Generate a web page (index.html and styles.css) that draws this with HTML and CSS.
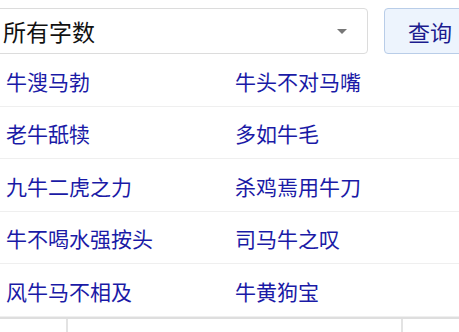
FILE: index.html
```html
<!DOCTYPE html>
<html lang="zh-CN">
<head>
    <meta charset="UTF-8">
    <meta name="viewport" content="width=device-width, initial-scale=1.0">
    <title>牛的成语</title>
    <link rel="stylesheet" href="styles.css">
</head>
<body>
    <div class="search">
        <div class="select">
            <span>所有字数</span>
            <span class="caret"></span>
        </div>
        <button class="query">查询</button>
    </div>
    <div class="list">
        <a href="#">牛溲马勃</a>
        <a href="#">牛头不对马嘴</a>
        <a href="#">老牛舐犊</a>
        <a href="#">多如牛毛</a>
        <a href="#">九牛二虎之力</a>
        <a href="#">杀鸡焉用牛刀</a>
        <a href="#">牛不喝水强按头</a>
        <a href="#">司马牛之叹</a>
        <a href="#">风牛马不相及</a>
        <a href="#">牛黄狗宝</a>
    </div>
    <div class="foot">
        <div class="cell first"></div>
        <div class="cell mid"></div>
        <div class="cell"></div>
    </div>
</body>
</html>
```

FILE: styles.css
```css
* {
    margin: 0;
    padding: 0;
    box-sizing: border-box;
}

html, body {
    width: 100%;
    height: 100%;
    overflow: hidden;
    background-color: #fff;
    font-family: "Noto Sans CJK SC", "Noto Sans", sans-serif;
}

.search {
    display: flex;
    align-items: center;
    gap: 16px;
    padding-top: 8px;
    margin-left: -10px;
    width: 500px;
}

.select {
    width: 378px;
    height: 46px;
    border: 1px solid #dcdcdc;
    border-radius: 4px;
    display: flex;
    align-items: center;
    justify-content: space-between;
    padding: 0 20px 0 12px;
    font-size: 23px;
    color: #111;
}

.caret {
    width: 0;
    height: 0;
    border-left: 5px solid transparent;
    border-right: 5px solid transparent;
    border-top: 5px solid #777;
}

.query {
    width: 96px;
    height: 46px;
    border: 1px solid #b9cde8;
    border-radius: 4px;
    background-color: #edf4fd;
    color: #1c1c8e;
    font-family: inherit;
    font-size: 22px;
    text-align: left;
    padding-left: 23px;
}

.list {
    display: grid;
    grid-template-columns: 229px 1fr;
}

.list a {
    display: flex;
    align-items: center;
    height: 52.5px;
    padding-left: 6px;
    padding-top: 2px;
    border-bottom: 1px solid #efefef;
    color: #1a1aa6;
    font-size: 21px;
    text-decoration: none;
}

.foot {
    display: grid;
    grid-template-columns: 66px 337px 1fr;
    height: 40px;
    border-top: 2px solid #dedede;
}

.cell.mid {
    border-left: 2px solid #e3e3e3;
    border-right: 2px solid #e3e3e3;
}
```
